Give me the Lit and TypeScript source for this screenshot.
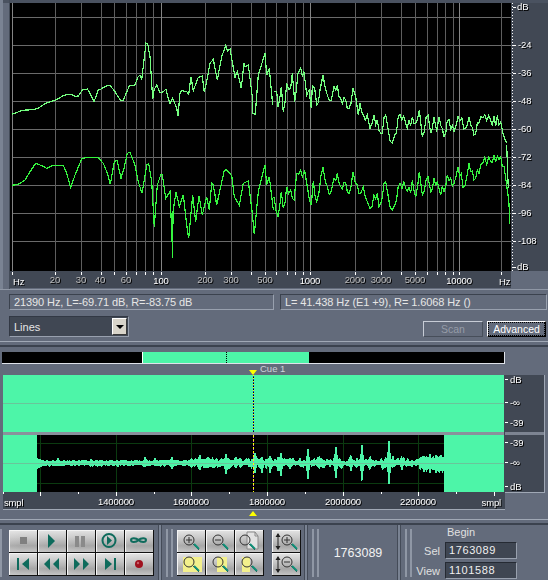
import { LitElement, html, css, svg } from "lit";
import { customElement } from "lit/decorators.js";

const VX = [12,55,81,101,114,126,136,145,153,161,205,231,251,265,276,287,295,303,310,355,381,401,415,427,437,445,453,459,501];
const BRIGHT = new Set([161,310,459]);
const HY = [17,45,73,101,129,157,185,213,241];

const HLABELS: [number,string,boolean][] = [[55,"20",false],[81,"30",false],[100,"40",false],[126,"60",false],[161,"100",true],[205,"200",false],[231,"300",false],[265,"500",false],[310,"1000",true],[355,"2000",false],[381,"3000",false],[415,"5000",false],[459,"10000",true]];
const DBL: [number,string][] = [[45,"-24"],[73,"-36"],[101,"-48"],[129,"-60"],[157,"-72"],[185,"-84"],[213,"-96"],[241,"-108"]];

// traced in 3x reference coordinates: [x,y] pairs
const UP_A = [36,343,50,338,65,331,100,329,115,325,130,314,142,308,165,301,178,295,190,286,212,283,225,289,235,288,247,270,262,267,270,280,282,305,295,270,305,266,318,258,330,256,345,275,362,302,370,300,388,258,405,255,413,232,420,225,425,240,432,180,438,130,443,132,450,170,458,297,462,270,470,255,480,278,490,275,498,267,505,295,510,310,518,295,530,325,534,347,540,280,545,272,560,275,566,283,573,230,580,272,595,232,607,228,613,277,622,235,630,190,640,178,652,240,665,170,677,137,683,153,690,147,705,232,712,215,724,265,732,188,735,200,745,195,757,290,758,340,766,343,775,225,795,160,800,225,808,205,818,315];
const UP_B = [0,275,8,275,12,320,16,305,22,260,28,335,38,250,44,268,50,265,55,220,62,305,72,220,80,205,85,228,90,215,98,285,105,270,112,325,115,258,122,265,128,315,138,270,147,225,160,285,172,300,180,260,190,255,200,295,215,300,225,325,237,265,245,290,253,345,258,310,268,345,280,345,288,385,300,345,320,400,335,345,342,385,355,430,362,405,378,342,395,370,410,375,415,350,425,370,436,330,445,410,462,345,470,400,480,350,488,395,495,350,510,410,525,360,540,395,552,350,575,385,585,350,600,405,620,350,632,345,650,360,680,365,688,405,698,430];
const UP_C = [698,0,702,110,703,130];
const LO_A = [36,121,55,118,75,105,90,80,107,55,125,62,140,70,160,61,190,61,200,85,212,128,225,90,245,42,260,37,295,38,310,55,322,85,331,118,343,50,351,45,363,100,372,70,382,25,390,22,405,60,415,110,426,145,440,60,446,55,455,110,463,245,472,120,482,90,487,88,497,160,510,140,516,280,518,338,519,200,528,140,538,185,550,150,563,265,566,278,578,150,587,230,597,152,607,210,620,155,628,195,635,115,640,120,650,180,672,80,678,73,695,92,703,155,718,180,730,115,745,108,757,205,763,268,775,140,795,60,800,120,808,95,820,195];
const LO_B = [0,155,12,215,22,140,28,190,38,125,50,135,60,165,68,85,80,75,85,95,92,78,100,125,112,180,118,108,128,170,147,67,160,125,172,138,180,100,190,85,200,125,215,115,225,145,237,80,250,120,260,145,268,125,280,170,288,190,300,150,320,175,335,110,342,150,355,195,362,180,378,115,395,130,410,145,415,105,425,155,436,80,445,150,462,95,470,140,480,100,495,130,510,140,520,90,540,115,552,65,572,125,585,55,600,105,620,60,632,38,650,50,680,35,695,100,702,150,705,175,707,238];

// adds the fine FFT noise between traced points
function noisy(a:number[], seed:number, lastFlat=686){
  let s=seed;
  const r=()=>{s=(s*1103515245+12345)&0x7fffffff;return s/0x7fffffff;};
  const o:number[]=[];
  for(let i=0;i<a.length-2;i+=2){
    const [x0,y0,x1,y1]=[a[i],a[i+1],a[i+2],a[i+3]];
    o.push(x0,y0);
    const n=Math.floor((x1-x0)/5);
    if(x0>lastFlat) continue;
    for(let k=1;k<n;k++){
      const t=k/n;
      o.push(x0+(x1-x0)*t, y0+(y1-y0)*t+(k%2?1:-1)*(4+r()*14));
    }
  }
  o.push(a[a.length-2],a[a.length-1]);
  return o;
}

const pts = (a:number[], ox:number, oy:number) => {
  const o:string[]=[];
  for(let i=0;i<a.length;i+=2) o.push(`${(a[i]/3+ox).toFixed(1)},${(a[i+1]/3+oy).toFixed(1)}`);
  return o.join(" ");
};

const SPIKES:[number,number,number][] = [[58,6,3],[91,5,3],[145,8,5],[155,6,4],[172,7,8],[200,10,9],[208,8,4],[226,11,14],[236,7,6],[255,13,13],[262,8,13],[270,9,12],[278,8,10],[281,13,16],[290,6,7],[308,18,20],[319,7,6],[335,7,6],[336,20,19],[351,9,10],[362,23,22],[370,8,7],[389,28,26],[393,9,5],[402,6,9],[412,4,4],[424,8,10],[430,11,13],[436,10,12],[440,8,10]];
function envelope(){
  const c=463; let top:string[]=[],bot:string[]=[];
  let s=7;
  const r=()=>{s=(s*1103515245+12345)&0x7fffffff;return s/0x7fffffff;};
  for(let x=37;x<=444;x++){
    let u = x<190?1.5+r()*2 : x<250?2+r()*4 : x<420?1.5+r()*r()*7 : 3+r()*7;
    let d = x<190?1.5+r()*2.5 : x<250?2+r()*4 : x<420?1.5+r()*r()*8 : 3+r()*9;
    if(x<45){u=Math.max(u,5-(x-37)*.4);d=Math.max(d,6-(x-37)*.5);}
    for(const [sx,su,sd] of SPIKES){
      const k=Math.abs(x-sx);
      if(k<=1){const f=k===0?1:.6;u=Math.max(u,su*f);d=Math.max(d,sd*f);}
    }
    top.push(`${x},${(c-u).toFixed(1)}`);
    bot.unshift(`${x},${(c+d).toFixed(1)}`);
  }
  return [...top,...bot].join(" ");
}
const ENV=envelope();

const T="#0e6b5c";
const H="#0f8f78";
const lens=(cx:number,cy:number,mark:any="")=>svg`
  <path d="M${cx+4} ${cy+4}L${cx+10} ${cy+10}" stroke="#444" stroke-width="1"/>
  <path d="M${cx+5} ${cy+4}L${cx+10} ${cy+9}" stroke="${H}" stroke-width="2"/>
  <circle cx="${cx}" cy="${cy}" r="5" fill="none" stroke="#333" stroke-width="1"/>
  ${mark}`;
const plus=(x:number,y:number)=>svg`<path d="M${x-3} ${y}H${x+3}M${x} ${y-3}V${y+3}" stroke="#333"/>`;
const minus=(x:number,y:number)=>svg`<path d="M${x-3} ${y}H${x+3}" stroke="#333"/>`;
const vArrow=(x:number)=>svg`<path d="M${x} 4V19" stroke="#222"/><path d="M${x-2.5} 7L${x} 3L${x+2.5} 7ZM${x-2.5} 16L${x} 20L${x+2.5} 16Z" fill="#222"/>`;
const Y="#f3f08c";

const ICONS:any[] = [
  svg`<rect x="11" y="7" width="7" height="7" fill="#7f7f7f"/>`,
  svg`<path d="M10 4L17 11L10 18Z" fill="${T}"/>`,
  svg`<rect x="8" y="6" width="4" height="11" fill="#8a8a8a"/><rect x="14" y="6" width="4" height="11" fill="#8a8a8a"/>`,
  svg`<circle cx="13" cy="10.5" r="6.5" fill="none" stroke="${T}" stroke-width="2"/><path d="M11 6L16 10.5L11 15Z" fill="${T}"/>`,
  svg`<path d="M13.5 10C11 7.5 6 7.5 6 10S11 12.5 13.5 10S21 7.5 21 10S16 12.5 13.5 10Z" fill="none" stroke="${T}" stroke-width="2"/>`,
  svg`<rect x="8" y="5" width="2" height="12" fill="${T}"/><path d="M20 5L13 11L20 17Z" fill="${T}"/>`,
  svg`<path d="M12 5L6 11L12 17ZM21 5L15 11L21 17Z" fill="${T}"/>`,
  svg`<path d="M7 5L13 11L7 17ZM16 5L22 11L16 17Z" fill="${T}"/>`,
  svg`<path d="M9 5L16 11L9 17Z" fill="${T}"/><rect x="18" y="5" width="2" height="12" fill="${T}"/>`,
  svg`<circle cx="14" cy="11" r="4" fill="#a0121f"/><circle cx="13" cy="10" r="1.2" fill="#c8606a"/>`,
];
const ZOOMS:any[] = [
  lens(12,10,plus(12,10)),
  lens(12,10,minus(12,10)),
  svg`<path d="M12 2H20L23 6V19H12Z" fill="#e2e2e2" stroke="#8a8a8a"/><path d="M20 2V6H23" fill="none" stroke="#8a8a8a"/>${lens(10,10)}`,
  svg`<rect x="6" y="4" width="19" height="15" fill="${Y}"/>${lens(12,9)}`,
  svg`<rect x="11" y="4" width="10" height="15" fill="${Y}"/>${lens(12,9)}`,
  svg`<rect x="7" y="4" width="8" height="15" fill="${Y}"/>${lens(12,9)}`,
];
const VZ:any[] = [
  svg`${vArrow(6)}${lens(15,10,plus(15,10))}`,
  svg`${vArrow(6)}${lens(15,9,minus(15,9))}`,
];

@customElement("app-root")
export class AppRoot extends LitElement {
  static styles = css`
    :host{display:block;width:548px;height:580px;overflow:hidden;background:#636b7b;font-family:"Liberation Sans",Arial,sans-serif;color:#e6e6e6;}
    svg{display:block;}
    text{font-family:"Liberation Sans",Arial,sans-serif;}
    .rl{font-size:9.5px;fill:#fff;letter-spacing:-.15px;filter:drop-shadow(1px 1px 0 #000);}
    .rl.dim{fill:#bdbdbd;}
    .spectrum{display:flex;height:290px;box-sizing:border-box;border-bottom:1px solid #8f97a5;box-shadow:inset 0 3px 0 #4a5260;}
    .lstrip{width:10px;flex:none;box-sizing:border-box;border-left:3px solid #7a8393;border-right:1px solid #434b58;}
    .info{display:flex;margin:4px 1px 0 9px;gap:6px;}
    .sunken{box-sizing:border-box;height:16px;border:1px solid;border-color:#3b424e #98a0ae #98a0ae #3b424e;font-size:11px;line-height:14px;padding-left:4px;letter-spacing:-.1px;white-space:nowrap;}
    .info .a{width:265px;}
    .info .b{flex:1;}
    .ctrl{display:flex;align-items:flex-start;margin:6px 2px 0 9px;height:21px;}
    .select{box-sizing:border-box;width:120px;height:21px;display:flex;align-items:center;justify-content:space-between;background:#404753;border:1px solid;border-color:#323844 #98a0ae #98a0ae #323844;padding-left:4px;font-size:11px;padding-right:1px;}
    .arrow{box-sizing:border-box;width:15px;height:17px;background:#d8d4ca;border:1px solid;border-color:#fff #3a3a3a #3a3a3a #fff;display:flex;align-items:center;justify-content:center;}
    .arrow i{border-left:4px solid transparent;border-right:4px solid transparent;border-top:4px solid #000;}
    .spacer{flex:1;}
    .btn{box-sizing:border-box;height:16px;margin-top:5px;font-size:10.5px;line-height:14px;text-align:center;border:1px solid;background:#636b7b;}
    .btn.scan{width:60px;color:#969ca8;border-color:#c7ccd6 #474e5a #474e5a #c7ccd6;margin-right:4px;}
    .btn.adv{width:59px;color:#fff;border-color:#fff #000 #000 #fff;outline:1px dotted #000;outline-offset:-2px;}
    .hsep{box-sizing:border-box;height:6px;margin-top:4px;border-top:1px solid #a0a8b5;border-bottom:2px solid #3b424e;}
    .over{position:relative;box-sizing:border-box;height:12px;width:503px;margin:5px 0 0 2px;background:#000;border-right:1px solid #dfe3ea;border-bottom:1px solid #dfe3ea;display:flex;}
    .over .l{width:140px;}
    .over .sel{width:167px;background:#4df5a8;border-left:1px solid #fff;box-sizing:border-box;display:flex;padding-left:83px;}
    .over .sel i{width:0;border-left:1px dotted #000;}
    .cue{height:11px;display:flex;align-items:flex-end;padding-left:249px;gap:3px;font-size:9.5px;color:#cfd3da;line-height:11px;}
    .cue .tri{width:0;height:0;border-left:4px solid transparent;border-right:4px solid transparent;border-top:5px solid #ffff00;}
    .cue span{position:relative;top:-1px;}
    .wave{display:flex;padding-left:3px;height:135px;}
    .rightr{box-sizing:border-box;width:40px;height:118px;}
    .mark{height:6px;padding-left:249px;}
    .mark i{display:block;width:0;height:0;border-left:4px solid transparent;border-right:4px solid transparent;border-bottom:5px solid #ffff00;margin-top:1px;}
    .hsep2{box-sizing:border-box;height:6px;margin-top:2px;border-top:1px solid #a0a8b5;border-bottom:2px solid #3b424e;}
    .tools{display:flex;height:56px;}
    .vbar{flex:none;width:4px;background:#7a8393;border:solid;border-width:0 1px;border-color:#a0a8b5 #444b58;box-sizing:border-box;height:56px;}
    .grip{flex:none;width:7px;height:48px;margin-top:4px;box-sizing:border-box;border-left:2px solid #8f97a5;border-right:2px solid #8f97a5;}
    .grip.one{width:3px;border-right:0;}
    .g3{width:3px;flex:none}.g4{width:4px;flex:none}.g6{width:6px;flex:none}.g8{width:8px;flex:none}
    .bgrid{display:grid;gap:1px;background:#111;padding:0 1px 1px 0;box-sizing:border-box;align-self:flex-start;margin-top:5px;}
    .bgrid.c5{grid-template-columns:repeat(5,28px);}
    .bgrid.c3{grid-template-columns:repeat(3,28px);}
    .bgrid.c1{grid-template-columns:28px;}
    .tb{height:22px;background:linear-gradient(100deg,rgba(255,255,255,.12),rgba(0,0,0,0) 45%),linear-gradient(180deg,#e4e4e4 0%,#c8c8c8 35%,#a6a6a6 72%,#c4c4c4 100%);box-shadow:inset 1px 1px 0 #f4f4f4;}
    .pos{flex:none;width:78px;text-align:center;font-size:12.5px;line-height:56px;color:#f2f2f2;}
    .rpanel{flex:none;display:grid;grid-template-columns:28px 72px;column-gap:5px;grid-template-rows:14px 17px 17px;row-gap:3px;align-items:center;font-size:11px;color:#e0e0e0;}
    .rpanel .h{grid-column:2;padding-left:2px;line-height:14px;}
    .rpanel .lb{text-align:right;white-space:nowrap;}
    .inp{box-sizing:border-box;height:17px;background:#3f4652;border:1px solid;border-color:#252a33 #98a0ae #98a0ae #252a33;font-size:11px;line-height:15px;padding-left:3px;letter-spacing:.6px;color:#f0f0f0;}
  `;

  private spectrum(){
    const dots:any[]=[];
    for(let y=3;y<271;y+=3) dots.push(svg`<rect x="512" y="${y}" width="1" height="1" fill="#fff"/>`);
    return svg`<svg width="538" height="289" viewBox="10 0 538 289">
      <rect x="511" y="3" width="37" height="268" fill="#414854"/>
      <rect x="10" y="271" width="501" height="17" fill="#414854"/>
      <rect x="10" y="3" width="501" height="268" fill="#000"/>
      <g shape-rendering="crispEdges" stroke-width="1">
        ${HY.map(y=>svg`<line x1="12" x2="511" y1="${y+.5}" y2="${y+.5}" stroke="#6a6a6a"/>`)}
        ${VX.map(x=>svg`<line x1="${x+.5}" x2="${x+.5}" y1="3" y2="271" stroke="${BRIGHT.has(x)||x===12?'#848484':'#5e5e5e'}"/>`)}
        ${VX.map(x=>svg`<line x1="${x+.5}" x2="${x+.5}" y1="272" y2="275" stroke="#fff"/>`)}
      </g>
      <g fill="none" shape-rendering="crispEdges" stroke-width="1.2">
        <polyline points="${pts(LO_A,0,145)}" stroke="#35f53f"/>
        <polyline points="${pts(noisy(LO_B,3),274,145)}" stroke="#35f53f"/>
        <polyline points="${pts(UP_A,0,0)}" stroke="#74ff80"/>
        <polyline points="${pts(noisy(UP_B,11),274,0)}" stroke="#74ff80"/>
        <polyline points="${pts(UP_C,274,145)}" stroke="#74ff80"/>
      </g>
      ${dots}
      ${[...DBL.map(d=>d[0]),7,267].map(y=>svg`<rect x="513" y="${y}" width="3" height="1" fill="#fff"/>`)}
      ${DBL.map(([y,t])=>svg`<text class="rl" x="518" y="${y+3}">${t}</text>`)}
      <text class="rl" x="517" y="10">dB</text>
      <text class="rl" x="517" y="270">dB</text>
      <text class="rl" x="13" y="285">Hz</text>
      <text class="rl" x="499" y="285" >Hz</text>
      ${HLABELS.map(([x,t,b])=>svg`<text class="rl ${b?'':'dim'}" x="${x}" y="${b?284:283}" text-anchor="middle">${t}</text>`)}
    </svg>`;
  }

  private wave(){
    const gv=[40,116,191,267,343,418];
    const ticks=[3,40,78,116,154,191,229,267,305,343,381,418,456,494];
    const labs=[[116,"1400000"],[191,"1600000"],[267,"1800000"],[343,"2000000"],[418,"2200000"]];
    return svg`<svg width="502" height="135" viewBox="3 375 502 135">
      <rect x="3" y="375" width="502" height="135" fill="#414854"/>
      <rect x="3" y="509" width="502" height="1" fill="#a0a8b5"/>
      <rect x="3" y="375" width="501" height="57" fill="#4df5a8"/>
      <rect x="3" y="432" width="501" height="3" fill="#8a909c"/>
      <rect x="3" y="435" width="501" height="57" fill="#4df5a8"/>
      <rect x="37" y="435" width="407" height="57" fill="#000"/>
      <g shape-rendering="crispEdges">
        ${[443,483].map(y=>svg`<rect x="37" y="${y}" width="407" height="1" fill="#0b3a10"/>`)}
        ${gv.map(x=>svg`<rect x="${x}" y="435" width="1" height="57" fill="#0b3a10"/>`)}
        <rect x="3" y="403" width="501" height="1" fill="#69c59a"/>
      </g>
      <polygon points="${ENV}" fill="#4df5a8" shape-rendering="crispEdges"/>
      <rect x="3" y="463" width="501" height="1" fill="#69c59a"/>
      <line x1="253.5" x2="253.5" y1="375" y2="432" stroke="#ffff00" stroke-dasharray="1 2"/>
      <line x1="253.5" x2="253.5" y1="376" y2="432" stroke="#1030c0" stroke-dasharray="1 2"/>
      <line x1="253.5" x2="253.5" y1="377" y2="432" stroke="#000" stroke-dasharray="1 2"/>
      <line x1="253.5" x2="253.5" y1="435" y2="492" stroke="#ffff00" stroke-dasharray="2 2"/>
      <line x1="253.5" x2="253.5" y1="437" y2="492" stroke="#d060d0" stroke-dasharray="1 3"/>
      ${ticks.map((x,i)=>svg`<rect x="${x}" y="492" width="1" height="${i%2?4:2}" fill="#fff"/>`)}
      <text class="rl" x="4" y="506">smpl</text>
      <text class="rl" x="501" y="506" text-anchor="end">smpl</text>
      ${labs.map(([x,t])=>svg`<text class="rl" x="${x}" y="505" text-anchor="middle">${t}</text>`)}
    </svg>`;
  }

  private rightRuler(){
    const rows:[number,string][]=[[380,"dB"],[403,"-∞"],[423,"-39"],[443,"-39"],[463,"-∞"],[487,"dB"]];
    return svg`<svg class="rightr" width="40" height="118" viewBox="505 375 40 118">
      <rect x="505" y="375" width="39" height="117" fill="#414854"/>
      <rect x="505" y="432" width="39" height="3" fill="#7d8492"/>
      <rect x="544" y="375" width="1" height="118" fill="#a0a8b5"/>
      <rect x="505" y="492" width="40" height="1" fill="#a0a8b5"/>
      ${rows.map(([y,t])=>svg`<rect x="505" y="${y-1}" width="3" height="1" fill="#fff"/><text class="rl" x="510" y="${y+3}">${t}</text>`)}
    </svg>`;
  }

  private btns(list:any[]){
    return list.map(i=>html`<div class="tb"><svg width="28" height="22" viewBox="0 0 28 22">${i}</svg></div>`);
  }

  render(){
    return html`
      <div class="spectrum"><div class="lstrip"></div>${this.spectrum()}</div>
      <div class="info">
        <div class="sunken a">21390 Hz, L=-69.71 dB, R=-83.75 dB</div>
        <div class="sunken b">L= 41.438 Hz (E1 +9), R= 1.6068 Hz ()</div>
      </div>
      <div class="ctrl">
        <div class="select"><span>Lines</span><div class="arrow"><i></i></div></div>
        <div class="spacer"></div>
        <div class="btn scan">Scan</div>
        <div class="btn adv">Advanced</div>
      </div>
      <div class="hsep"></div>
      <div class="over"><div class="l"></div><div class="sel"><i></i></div></div>
      <div class="cue"><div class="tri"></div><span>Cue 1</span></div>
      <div class="wave">${this.wave()}${this.rightRuler()}</div>
      <div class="mark"><i></i></div>
      <div class="hsep2"></div>
      <div class="tools">
        <div class="grip one"></div>
        <div class="g6"></div>
        <div class="bgrid c5">${this.btns(ICONS)}</div>
        <div class="g4"></div>
        <div class="vbar"></div>
        <div class="g4"></div>
        <div class="grip"></div>
        <div class="g4"></div>
        <div class="bgrid c3">${this.btns(ZOOMS)}</div>
        <div class="g8"></div>
        <div class="bgrid c1">${this.btns(VZ)}</div>
        <div class="g3"></div>
        <div class="vbar"></div>
        <div class="g4"></div>
        <div class="grip"></div>
        <div class="pos">1763089</div>
        <div class="vbar"></div>
        <div class="g4"></div>
        <div class="grip"></div>
        <div class="rpanel">
          <div class="h">Begin</div>
          <div class="lb">Sel</div><div class="inp">1763089</div>
          <div class="lb">View</div><div class="inp">1101588</div>
        </div>
      </div>`;
  }
}
